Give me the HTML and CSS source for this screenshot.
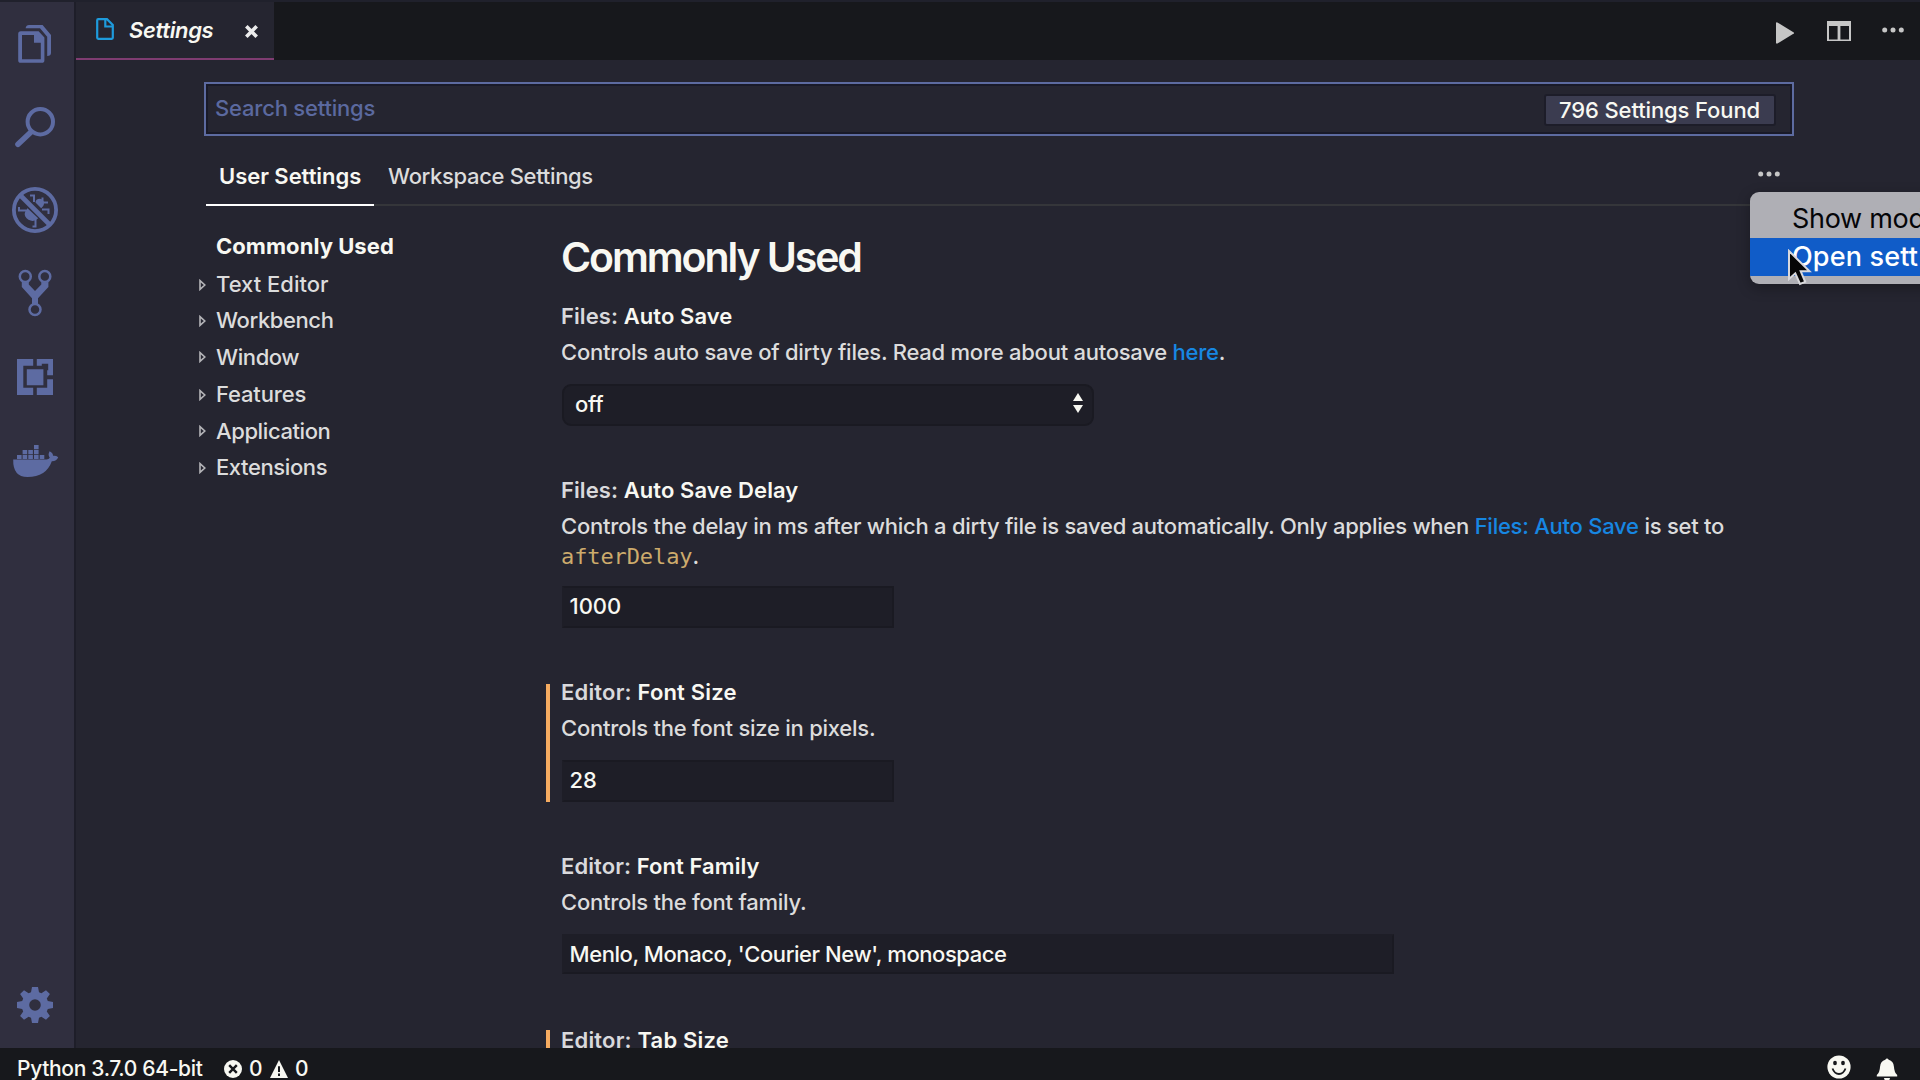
FILE: index.html
```html
<!DOCTYPE html>
<html lang="en">
<head>
<meta charset="utf-8">
<title>Settings</title>
<link rel="stylesheet" href="styles.css">
</head>
<body>
<div class="window">
  <div class="workbench">
    <nav class="activity-bar">
      <a class="activity" aria-label="Explorer"><svg viewBox="0 2 74 83"><path fill-rule="evenodd" d="M20.8 31.3H38.6L44.4 37.5V60.2Q44.4 62.8 41.8 62.8H20.8Q18.2 62.8 18.2 60.2V33.9Q18.2 31.3 20.8 31.3ZM22 35V59.2H40.8V42.8H34V35Z"/><path d="M25.6 28.2Q26.2 25 29 25H42.6L51 35V53Q51 56 47.2 56V36.8L40 28.2Z"/></svg></a>
      <a class="activity" aria-label="Search"><svg viewBox="0 85 74 83"><circle class="stroke" cx="40.3" cy="121.7" r="12.7" stroke-width="4"/><path class="stroke" d="M30.5 132.5L18 144.3" stroke-width="5.6" stroke-linecap="round"/></svg></a>
      <a class="activity" aria-label="Debug"><svg viewBox="0 168 74 83"><circle class="stroke" cx="35" cy="210" r="21.1" stroke-width="3.8"/><path class="stroke" stroke-width="4.6" d="M20 195L50 225"/><path d="M35.5 202.5Q35.5 198.7 40 198.7Q44.3 199.4 44 204Q43.6 206.8 41.2 208.2ZM27.5 208.3L38.2 218.3Q34 222.6 28.5 219.8Q24 216.8 24.8 213Q25.5 209.8 27.5 208.3Z"/><path class="stroke" stroke-width="2" d="M30 195.5H34V202M42.5 197.5V202.5H48M42 209.5H48.5V214M26 210.5H19V207M33.5 218H35.5V226.5H32.5"/></svg></a>
      <a class="activity" aria-label="Source control"><svg viewBox="0 251 74 83"><g class="stroke" stroke-width="2.5"><circle cx="25.3" cy="276.4" r="5.5"/><circle cx="44.8" cy="276.4" r="5.5"/><circle cx="35" cy="309.5" r="5.5"/></g><path d="M21.8 281.5Q25.3 284 28.8 281.5V284.5L35 291L41.3 284.5V281.5Q44.8 284 48.4 281.5V287L38 298.2V304.5Q35 302.5 32 304.5V298.2L21.8 287Z"/></svg></a>
      <a class="activity" aria-label="Extensions"><svg viewBox="0 334 74 83"><path d="M17 359H33.2V365.7H23.3V387.8H33.2V395H17ZM36.8 359H53V375.2H47.2V370.2H48.2V363.7H41.8V365.7H36.8ZM53 379.2V395H36.8V387.8H47.2V379.2ZM26.8 369.2H43.4V385.3H26.8Z"/></svg></a>
      <a class="activity" aria-label="Docker"><svg viewBox="0 417 74 83"><path d="M13.2 459.5H46.5Q48.8 459.3 49.8 457.8Q47.5 454.8 49.6 451.2Q53.2 453 53 455.8Q56 455.4 58.2 457.2Q56.6 461.3 51.8 461.2Q46.2 477 27.5 477Q12.8 477 13.2 459.5ZM17 455H21.6V459H17ZM22.6 455H27.2V459H22.6ZM28.3 455H32.9V459H28.3ZM34 455H38.6V459H34ZM39.7 455H44.3V459H39.7ZM22.6 450H27.2V454.2H22.6ZM28.3 450H32.9V454.2H28.3ZM34 450H38.6V454.2H34ZM34 445H38.6V449.2H34Z"/></svg></a>
      <a class="activity activity-bottom" aria-label="Manage"><svg viewBox="0 964 74 83"><path fill-rule="evenodd" d="M32 987H38L39 992.2L41.4 993.2L46 990.2L49.9 994.1L46.8 998.6L47.8 1001L53 1002V1008L47.8 1009L46.8 1011.4L49.9 1015.9L46 1019.8L41.4 1016.8L39 1017.8L38 1023H32L31 1017.8L28.6 1016.8L24 1019.8L20.1 1015.9L23.2 1011.4L22.2 1009L17 1008V1002L22.2 1001L23.2 998.6L20.1 994.1L24 990.2L28.6 993.2L31 992.2ZM35 999.2A5.8 5.8 0 1 0 35 1010.8A5.8 5.8 0 1 0 35 999.2Z"/></svg></a>
    </nav>
    <main class="editor">
      <header class="tabs">
        <div class="tab">
          <svg class="file-icon" viewBox="0 0 18 22"><path d="M1.2 2.2Q1.2 1.2 2.2 1.2H11L16.8 7V19.8Q16.8 20.8 15.8 20.8H2.2Q1.2 20.8 1.2 19.8ZM9.3 1.5V8.5H16.5"/></svg>
          <span class="tab-label">Settings</span>
          <svg class="close-icon" viewBox="0 0 13 13"><path d="M1.3 1.3L11.7 11.7M11.7 1.3L1.3 11.7"/></svg>
        </div>
        <div class="actions">
          <svg class="play-icon" viewBox="0 0 18 22"><path d="M0 .8Q.4 0 1.4 .4L17.8 10.4Q18.2 11 17.8 11.4L1.4 21.6Q.4 21.8 0 21Z"/></svg>
          <svg class="split-icon" viewBox="0 0 24 20"><path fill-rule="evenodd" d="M0 0H24V20H0ZM2 5V18.4H10.6V5ZM13.4 5V18.4H22V5Z"/></svg>
          <svg class="dots" viewBox="0 0 22 6"><circle cx="2.7" cy="3" r="2.5"/><circle cx="11" cy="3" r="2.5"/><circle cx="19.3" cy="3" r="2.5"/></svg>
        </div>
      </header>
      <section class="settings">
        <div class="search">
          <span class="placeholder">Search settings</span>
          <span class="count">796 Settings Found</span>
        </div>
        <div class="scopes">
          <span class="scope scope-active">User Settings</span>
          <span class="scope scope-workspace">Workspace Settings</span>
          <svg class="dots scope-more" viewBox="0 0 22 6"><circle cx="2.7" cy="3" r="2.5"/><circle cx="11" cy="3" r="2.5"/><circle cx="19.3" cy="3" r="2.5"/></svg>
        </div>
        <div class="content">
          <ul class="toc">
            <li class="toc-current">Commonly Used</li>
            <li><svg class="twistie" viewBox="0 0 7 12"><path d="M1 1.6L5.8 6L1 10.4Z"/></svg>Text Editor</li>
            <li><svg class="twistie" viewBox="0 0 7 12"><path d="M1 1.6L5.8 6L1 10.4Z"/></svg><span class="tight">Workbench</span></li>
            <li><svg class="twistie" viewBox="0 0 7 12"><path d="M1 1.6L5.8 6L1 10.4Z"/></svg><span class="tight">Window</span></li>
            <li class="toc-gap"><svg class="twistie" viewBox="0 0 7 12"><path d="M1 1.6L5.8 6L1 10.4Z"/></svg><span class="snug">Features</span></li>
            <li><svg class="twistie" viewBox="0 0 7 12"><path d="M1 1.6L5.8 6L1 10.4Z"/></svg><span class="tight">Application</span></li>
            <li><svg class="twistie" viewBox="0 0 7 12"><path d="M1 1.6L5.8 6L1 10.4Z"/></svg><span class="tight">Extensions</span></li>
          </ul>
          <div class="list">
            <h1>Commonly Used</h1>
            <article class="setting">
              <h2><span>Files: </span>Auto Save</h2>
              <p>Controls auto save of dirty files. Read more about autosave <a>here</a>.</p>
              <div class="select"><span class="select-value">off</span><svg class="arrows" viewBox="0 0 10 20"><path d="M0 8L5 0L10 8ZM0 12L5 20L10 12Z"/></svg></div>
            </article>
            <article class="setting setting-delay">
              <h2><span>Files: </span>Auto Save Delay</h2>
              <p>Controls the delay in ms after which a dirty file is saved automatically. Only applies when <a>Files: Auto Save</a> is set to<br><code>afterDelay</code>.</p>
              <div class="input">1000</div>
            </article>
            <article class="setting setting-size modified">
              <h2><span>Editor: </span>Font Size</h2>
              <p>Controls the font size in pixels.</p>
              <div class="input">28</div>
            </article>
            <article class="setting">
              <h2><span>Editor: </span>Font Family</h2>
              <p>Controls the font family.</p>
              <div class="input input-wide">Menlo, Monaco, 'Courier New', monospace</div>
            </article>
            <article class="setting modified modified-last">
              <h2><span>Editor: </span>Tab Size</h2>
            </article>
          </div>
        </div>
      </section>
    </main>
  </div>
  <footer class="status">
    <span class="status-python">Python 3.7.0 64-bit</span>
    <svg class="error-icon" viewBox="0 0 18 18"><circle cx="9" cy="9" r="9"/><path d="M5.2 5.2L12.8 12.8M12.8 5.2L5.2 12.8"/></svg>
    <span>0</span>
    <svg class="warn-icon" viewBox="0 0 18 18"><path class="warn-shape" d="M9 0L18 18H0Z"/><path class="warn-mark" d="M9 6.2V12M9 13.6V16"/></svg>
    <span>0</span>
    <svg class="smile-icon" viewBox="0 0 24 24"><circle cx="12" cy="12" r="11.6"/><ellipse class="eye" cx="8" cy="8" rx="1.9" ry="2.3"/><ellipse class="eye" cx="16" cy="8" rx="1.9" ry="2.3"/><path d="M5.5 13.5Q7.5 19 12 19Q16.5 19 18.5 13.5"/></svg>
    <svg class="bell-icon" viewBox="0 0 22 24"><path d="M9.3 1.8Q11 -.6 12.7 1.8Q17.6 3 18 9Q18.2 14.2 21.2 17V18.6H.8V17Q3.8 14.2 4 9Q4.4 3 9.3 1.8ZM8 20H14Q13.5 23 11 23Q8.500 23 8 20Z"/></svg>
  </footer>
  <div class="menu">
    <div class="menu-item">Show mod</div>
    <div class="menu-item menu-selected">Open sett</div>
  </div>
  <svg class="cursor" viewBox="0 0 26 38"><path d="M2 2V30L8.300 24.300L13 35L18.200 32.800L13.700 22.300H22.500Z"/></svg>
</div>
</body>
</html>
```
FILE: styles.css
```css
* { box-sizing: border-box; }
body { margin: 0; background: #252530; }
svg { display: block; flex: none; }
h1, h2, p, ul { margin: 0; padding: 0; }

.window {
  position: relative;
  width: 1920px;
  height: 1080px;
  overflow: hidden;
  display: flex;
  flex-direction: column;
  border-top: 2px solid #20212c;
  background: #252530;
  color: #dcdcdc;
  font: 500 22px/30px Inter, "Liberation Sans", sans-serif;
  letter-spacing: -0.25px;
  white-space: nowrap;
}
.workbench { height: 1046px; display: flex; flex: none; }

.activity-bar {
  width: 76px;
  flex: none;
  display: flex;
  flex-direction: column;
  background: #302f3f;
  border-right: 2px solid #1e1e29;
}
.activity { height: 83px; flex: none; }
.activity svg { width: 74px; height: 83px; fill: #5d6ba2; }
.activity .stroke { fill: none; stroke: #5d6ba2; }
.activity-bottom { margin-top: auto; margin-bottom: 1px; }

.editor { flex: 1; min-width: 0; display: flex; flex-direction: column; overflow: hidden; }
.tabs { height: 58px; flex: none; display: flex; justify-content: space-between; background: #17181c; }
.tab {
  width: 198px;
  display: flex;
  align-items: center;
  padding: 0 16px 2px 20px;
  border-bottom: 2px solid #7f3c71;
  background: #252530;
}
.file-icon { width: 18px; height: 22px; fill: none; stroke: #1e9bdc; stroke-width: 2.2; }
.tab-label { margin: 2px 0 0 15px; color: #f8f8f2; font-style: italic; font-weight: 600; letter-spacing: -0.35px; }
.close-icon { width: 13px; height: 13px; margin: 4px 0 0 auto; stroke: #ececec; stroke-width: 3.6; }
.actions { display: flex; align-items: center; padding-right: 16px; fill: #c6c6c6; }
.play-icon { width: 18px; height: 22px; margin: 3px 33px 0 0; }
.split-icon { width: 24px; height: 20px; margin-right: 31px; }
.dots { width: 22px; height: 6px; }
.actions .dots { margin-top: -2px; }

.settings { flex: 1; padding: 22px 126px 0 128px; display: flex; flex-direction: column; }
.search {
  height: 54px;
  flex: none;
  display: flex;
  align-items: center;
  justify-content: space-between;
  padding: 0 16px 0 9px;
  border: 2px solid #5d6ba0;
  box-shadow: inset 0 0 0 2px #191a28;
}
.placeholder { margin-top: -2px; color: #5b699f; letter-spacing: -0.2px; }
.count {
  height: 32px;
  margin-top: 1px;
  padding: 0 14px 0 13px;
  border: 2px solid #1d1d29;
  border-radius: 3px;
  background: #3b3c50;
  color: #f8f8f2;
  line-height: 29px;
  letter-spacing: -0.12px;
}
.scopes {
  height: 70px;
  flex: none;
  display: flex;
  margin: 0 12px 0 2px;
  border-bottom: 2px solid #35363a;
}
.scope { height: 70px; padding-top: 25px; }
.scope-active {
  width: 168px;
  padding-left: 13px;
  border-bottom: 2px solid #fff;
  color: #f8f8f2;
  font-weight: 600;
  letter-spacing: -0.04px;
}
.scope-workspace { margin-left: 14px; letter-spacing: -0.33px; }
.scope-more { margin: 35px 2px 0 auto; fill: #c6c6c6; }

.content { display: flex; }
.toc { width: 355px; flex: none; padding-top: 25px; list-style: none; }
.toc li { display: flex; align-items: center; height: 30px; margin: 0 0 6.4px -5px; padding-left: 17px; letter-spacing: 0; }
.toc .toc-current { margin-bottom: 8px; color: #f8f8f2; font-weight: 700; letter-spacing: 0.05px; }
.toc .toc-gap { margin-top: 7.6px; }
.tight { letter-spacing: -0.4px; }
.snug { letter-spacing: -0.15px; }
.twistie { width: 7px; height: 12px; margin: 1px 10px 0 -17px; fill: none; stroke: #b4b4b8; stroke-width: 1.6; }

.list { flex: 1; padding: 21px 0 0 2px; }
h1 { height: 74px; color: #f8f8f2; font-size: 41px; line-height: 60px; font-weight: 600; letter-spacing: -2.1px; }
.setting { height: 174px; }
.setting-delay { height: 202px; }
.setting h2 { font-size: 22px; font-weight: 600; letter-spacing: 0.08px; color: #f8f8f2; }
.setting h2 span { color: #d9d9dc; }
.setting p { margin-top: 6px; }
.setting a { color: #1787e2; }
code { color: #cdab6c; font: 22px/28px "DejaVu Sans Mono", monospace; letter-spacing: -0.1px; }
.select, .input {
  height: 42px;
  margin: 17px 0 0 1px;
  border: 2px solid #1a1a22;
  background: #1e1e27;
  color: #f8f8f2;
  line-height: 36px;
}
.select {
  width: 532px;
  display: flex;
  align-items: center;
  justify-content: space-between;
  padding: 0 9px 0 11px;
  border-radius: 9px;
}
.select-value { margin-top: -2px; }
.arrows { width: 10px; height: 20px; margin-top: -4px; fill: #f8f8f2; }
.input { width: 332px; padding-left: 5.5px; border-left-color: #1e1e27; letter-spacing: 0; }
.setting-delay .input { margin-top: 15px; }
.input-wide { width: 832px; height: 40px; border-top-color: #1e1e27; letter-spacing: -0.43px; }
.modified { position: relative; }
.setting-size h2, .modified-last h2 { letter-spacing: 0.18px; }
.modified::before {
  content: "";
  position: absolute;
  left: -15px;
  top: 7px;
  width: 4px;
  height: 118px;
  background: #f5ab60;
}
.modified-last::before { top: 5px; }

.status {
  height: 32px;
  flex: none;
  display: flex;
  align-items: center;
  padding: 9px 22px 0 17px;
  background: #17181c;
  color: #f8f8f2;
  fill: #f8f8f2;
  font-size: 21px;
  letter-spacing: -0.33px;
}
.status-python { width: 207px; }
.error-icon, .warn-icon { width: 18px; height: 18px; }
.error-icon path { stroke: #17181c; stroke-width: 2.4; }
.error-icon + span { width: 20px; margin: 0 2px 0 7px; }
.warn-icon { margin-left: -1px; }
.warn-icon + span { margin-left: 7px; }
.warn-mark { stroke: #17181c; stroke-width: 2; }
.smile-icon { width: 24px; height: 24px; margin: -4px 0 0 auto; }
.smile-icon path { fill: none; stroke: #17181c; stroke-width: 1.8; }
.eye { fill: #17181c; }
.bell-icon { width: 22px; height: 24px; margin: 3px 0 0 25px; }

.menu {
  position: absolute;
  left: 1750px;
  top: 190px;
  width: 320px;
  height: 92px;
  padding-top: 8px;
  border-radius: 9px;
  overflow: hidden;
  background: #afafb5;
  box-shadow: 0 4px 14px rgba(0, 0, 0, 0.3);
  color: #050508;
  font-size: 27px;
  font-weight: 400;
  letter-spacing: -0.3px;
}
.menu-item { height: 38px; padding-left: 42px; line-height: 38px; }
.menu-selected { color: #fff; background: #105cc8; font-weight: 500; letter-spacing: 0.15px; }
.cursor {
  position: absolute;
  left: 1787px;
  top: 247px;
  width: 26px;
  height: 38px;
  fill: #060606;
  stroke: #d8d8dc;
  stroke-width: 2;
}
```
